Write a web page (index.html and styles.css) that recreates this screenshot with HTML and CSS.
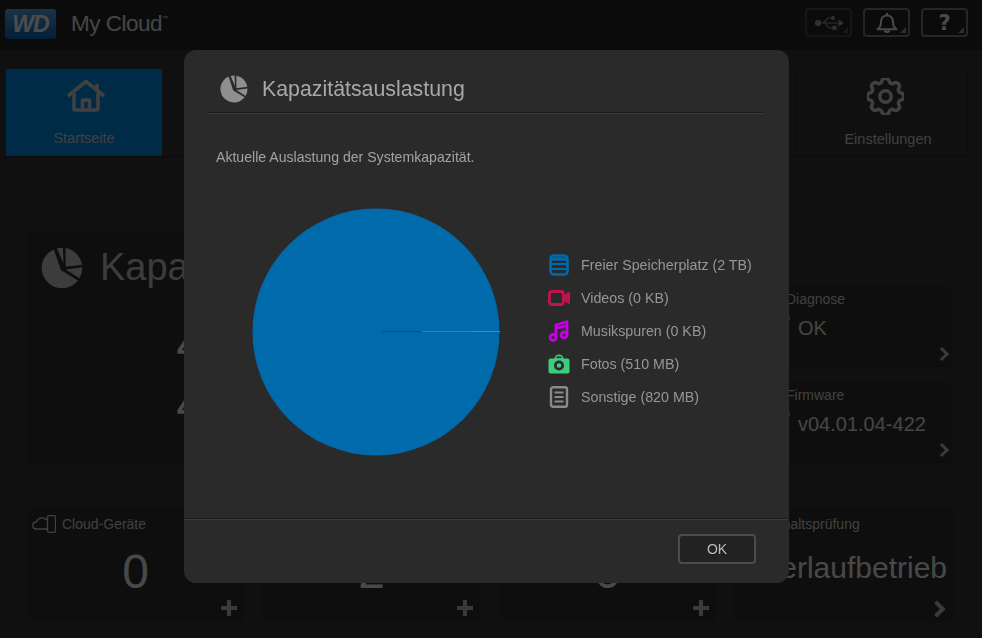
FILE: index.html
```html
<!DOCTYPE html>
<html lang="de">
<head>
  <meta charset="UTF-8">
  <title>My Cloud</title>
  <link rel="stylesheet" href="styles.css">
</head>
<body>

  <svg class="defs" width="0" height="0">
    <symbol id="pie" viewBox="0 0 28 28">
      <path d="M8.6 1.6 L13.2 15.4 L24.6 22.3 A13.5 13.5 0 1 1 8.6 1.6Z"/>
      <path d="M10.6 .9 A13.5 13.5 0 0 1 14.6 .5 L15 11Z"/>
      <path d="M16.4 .7 A13.5 13.5 0 0 1 27.3 11.8 L16.4 13.2Z"/>
      <path d="M16.5 15 L27.5 13.5 A13.5 13.5 0 0 1 25.6 20.9Z"/>
    </symbol>
  </svg>

  <!-- HEADER -->
  <header class="topbar">
    <div class="logo">WD</div>
    <div class="brand">My Cloud<sup>™</sup></div>
    <div class="top-buttons">
      <div class="top-btn dim">
        <svg width="28" height="14" viewBox="0 0 28 14" fill="none" stroke="currentColor" stroke-width="1.2">
          <circle cx="3" cy="7" r="2.6" fill="currentColor"/>
          <path d="M3 7H27M8 7L13 2H17M10 7L14 12H19"/>
          <path d="M24 4.5L28 7L24 9.5Z" fill="currentColor"/>
          <circle cx="18" cy="2" r="1.5" fill="currentColor"/>
          <rect x="18" y="10.4" width="3" height="3" fill="currentColor"/>
        </svg>
      </div>
      <div class="top-btn">
        <svg width="22" height="20" viewBox="0 0 22 20" fill="none" stroke="currentColor" stroke-width="2">
          <path d="M1.500 16.300C4.500 14.500 5 12 5 9C5 5 7.500 2.500 11 2.500S17 5 17 9C17 12 17.500 14.500 20.500 16.300Z" stroke-linejoin="round"/>
          <path d="M8.500 17.500Q11 20.500 13.500 17.500" stroke-width="2.200"/>
          <path d="M11 0V2.500"/>
        </svg>
      </div>
      <div class="top-btn help">?</div>
    </div>
  </header>

  <!-- NAV -->
  <nav class="nav">
    <div class="nav-tile home">
      <div class="nav-active">
        <svg class="home-icon" width="40" height="33" viewBox="0 0 40 33" fill="none" stroke="currentColor" stroke-width="3.600" stroke-linejoin="round">
          <path d="M2 17L20 2.500L38 17M31 5V11"/>
          <path d="M8 14V29.500Q8 31 9.500 31H30.500Q32 31 32 29.500V14"/>
          <path d="M16.500 31V21H23.500V31"/>
        </svg>
        <span>Startseite</span>
      </div>
    </div>
    <div class="nav-rest"></div>
    <div class="nav-tile settings">
      <svg width="37" height="37" viewBox="0 0 36 36" fill="none" stroke="currentColor" stroke-width="3.400">
        <path d="M14.500 2.900A3.600 3.600 0 0 1 21.500 2.900A3 3 0 0 0 26.200 4.900A3.600 3.600 0 0 1 31.100 9.800A3 3 0 0 0 33.100 14.500A3.600 3.600 0 0 1 33.100 21.500A3 3 0 0 0 31.100 26.200A3.600 3.600 0 0 1 26.200 31.100A3 3 0 0 0 21.500 33.100A3.600 3.600 0 0 1 14.500 33.100A3 3 0 0 0 9.800 31.100A3.600 3.600 0 0 1 4.900 26.200A3 3 0 0 0 2.900 21.500A3.600 3.600 0 0 1 2.900 14.500A3 3 0 0 0 4.900 9.800A3.600 3.600 0 0 1 9.800 4.900A3 3 0 0 0 14.500 2.900Z"/>
        <circle cx="18" cy="18" r="5.500"/>
      </svg>
      <span>Einstellungen</span>
    </div>
  </nav>

  <!-- DASHBOARD -->
  <main class="dash">
    <section class="panel panel-top">
      <div class="card capacity">
        <div class="capacity-head">
          <svg class="pie-big" width="42" height="42"><use href="#pie"/></svg>
          <span>Kapazität</span>
        </div>
        <div class="capacity-value first">4</div>
        <div class="capacity-value">4</div>
      </div>
      <div class="status-col">
        <div class="card status">
          <div class="status-label">Diagnose</div>
          <div class="status-value"><i class="dot"></i>OK</div>
          <span class="chev"></span>
        </div>
        <div class="card status">
          <div class="status-label">Firmware</div>
          <div class="status-value"><i class="dot"></i>v04.01.04-422</div>
          <span class="chev"></span>
        </div>
      </div>
    </section>

    <section class="panel panel-bottom">
      <div class="card small">
        <div class="small-label">
          <svg width="24" height="18" viewBox="0 0 24 18" fill="none" stroke="currentColor" stroke-width="1.300">
            <path d="M15 14H4.500C2 14 .7 12.500 .7 10.500S2 7 4.500 7C5.500 4 7.500 2.800 9.500 2.800S13.500 3.500 15 5"/>
            <rect x="15.500" y=".7" width="8" height="16.600" rx="1.500"/>
          </svg>
          Cloud-Geräte
        </div>
        <div class="small-value">0</div>
        <span class="plus"></span>
      </div>
      <div class="card small">
        <div class="small-label"></div>
        <div class="small-value">2</div>
        <span class="plus"></span>
      </div>
      <div class="card small">
        <div class="small-label"></div>
        <div class="small-value">0</div>
        <span class="plus"></span>
      </div>
      <div class="card small">
        <div class="small-label right-label">Inhaltsprüfung</div>
        <div class="small-value wide">Dauerlaufbetrieb</div>
        <span class="chev big"></span>
      </div>
    </section>
  </main>

  <div class="overlay"></div>

  <!-- DIALOG -->
  <div class="modal">
    <div class="modal-head">
      <svg class="pie-small" width="28" height="28"><use href="#pie"/></svg>
      <h1>Kapazitätsauslastung</h1>
    </div>
    <div class="modal-body">
      <p class="intro">Aktuelle Auslastung der Systemkapazität.</p>
      <div class="chart-row">
        <svg class="chart" width="248" height="248" viewBox="0 0 248 248">
          <circle cx="124" cy="124" r="123.500" fill="#006aab"/>
          <rect x="130" y="123" width="40" height="1" fill="#0f4d74"/>
          <rect x="170" y="123" width="50" height="1" fill="#4f7a78"/>
          <rect x="220" y="123" width="28" height="1" fill="#5f8d60"/>
        </svg>
        <ul class="legend">
          <li>
            <svg width="22" height="22" viewBox="0 0 22 22" fill="none" stroke="#0069aa" stroke-width="2.600">
              <rect x="2.500" y="1.500" width="17" height="19" rx="3.500"/>
              <path d="M2.500 5H19.500" stroke-width="3.500"/>
              <path d="M3 10H19M3 15H19" stroke-width="1.800"/>
            </svg>
            Freier Speicherplatz (2 TB)
          </li>
          <li>
            <svg width="22" height="16" viewBox="0 0 22 16" fill="none" stroke="#c2134f" stroke-width="2.800" stroke-linejoin="round">
              <rect x="1.400" y="1.500" width="14" height="13" rx="2.500"/>
              <path d="M16 7L20.600 3.500V12.500L16 9Z" fill="#c2134f"/>
            </svg>
            Videos (0 KB)
          </li>
          <li>
            <svg width="22" height="22" viewBox="0 0 22 22" fill="none" stroke="#c800e8" stroke-width="2.800">
              <circle cx="5" cy="17.500" r="3"/>
              <circle cx="16" cy="15" r="3"/>
              <path d="M8 17.500V5L19 1.800V15" stroke-linejoin="round"/>
              <path d="M8 8.500L19 5.500"/>
            </svg>
            Musikspuren (0 KB)
          </li>
          <li>
            <svg width="22" height="20" viewBox="0 0 22 20" fill="#3ecb80">
              <path d="M2.500 4.500H6.500C7 1.500 8.500 .5 11 .5S15 1.500 15.500 4.500H19.500Q21.500 4.500 21.500 6.500V17.500Q21.500 19.500 19.500 19.500H2.500Q.5 19.500 .5 17.500V6.500Q.5 4.500 2.500 4.500Z"/>
              <circle cx="11" cy="11.500" r="5" fill="#2a2a2a"/>
              <circle cx="11" cy="11.500" r="2.300"/>
              <rect x="8.500" y="2.500" width="5" height="1.600" fill="#2a2a2a"/>
            </svg>
            Fotos (510 MB)
          </li>
          <li>
            <svg width="22" height="22" viewBox="0 0 22 22" fill="none" stroke="#8a8a8a" stroke-width="2.400">
              <rect x="3" y="1.200" width="16" height="19.600" rx="2"/>
              <path d="M6.500 6.500H15.500M6.500 11H15.500M6.500 15.500H15.500" stroke-width="2"/>
            </svg>
            Sonstige (820 MB)
          </li>
        </ul>
      </div>
    </div>
    <div class="modal-foot">
      <button class="ok">OK</button>
    </div>
  </div>

</body>
</html>
```

FILE: styles.css
```css
:root {
  --bg-color: #363636;
  --top-color: #262626;
  --card-color: #303030;
  --line-color: #3e3e3e;
  --accent-color: #008fed;
  --text-color: #f0f0f0;
  --modal-color: #2a2a2a;
  --modal-text: #a3a3a3;
}
html, body {
  height: 638px;
  overflow: hidden;
}
body {
  font-family: "Liberation Sans", Arial, sans-serif;
  margin: 0;
  background: var(--bg-color);
  color: var(--text-color);
}
.defs {
  display: block;
  height: 0;
}

/* header */
.topbar {
  height: 50px;
  box-sizing: border-box;
  padding: 9px 14px 0 5px;
  display: flex;
  align-items: flex-start;
  background: var(--top-color);
}
.logo {
  width: 51px;
  height: 30px;
  border-radius: 3px;
  background: linear-gradient(#5aa8f0, #0a66c0);
  color: #fff;
  font-size: 23px;
  line-height: 30px;
  font-weight: bold;
  font-style: italic;
  text-align: center;
  letter-spacing: -1px;
}
.brand {
  margin-left: 15px;
  font-size: 22.5px;
  line-height: 30px;
  letter-spacing: -.5px;
  color: #e8e8e8;
}
.brand sup {
  font-size: 6px;
  vertical-align: 11px;
  line-height: 0;
}
.top-buttons {
  margin-left: auto;
  display: flex;
  gap: 11px;
  margin-top: -1px;
}
.top-btn {
  position: relative;
  width: 47px;
  height: 29px;
  box-sizing: border-box;
  border: 2px solid #808080;
  border-radius: 4px;
  display: flex;
  align-items: center;
  justify-content: center;
  color: #f4f4f4;
}
.top-btn::after {
  content: "";
  position: absolute;
  right: 2px;
  bottom: 2px;
  border-style: solid;
  border-width: 0 0 6px 6px;
  border-color: transparent transparent #9a9a9a transparent;
}
.top-btn.dim {
  border-color: #4a4a4a;
  color: #a0a0a0;
}
.top-btn.dim::after {
  border-bottom-color: #555;
}
.help {
  font-size: 21px;
  font-weight: bold;
  font-family: "DejaVu Sans", sans-serif;
}

/* nav */
.nav {
  margin: 19px 14px 0 6px;
  height: 87px;
  display: flex;
  border-bottom: 1px solid #262626;
}
.nav-tile {
  display: flex;
  flex-direction: column;
  align-items: center;
  font-size: 14.5px;
  color: #d8d8d8;
  box-sizing: border-box;
}
.home {
  width: 173px;
  align-items: flex-start;
  border-right: 1px solid var(--line-color);
}
.nav-active {
  width: 156px;
  height: 100%;
  background: var(--accent-color);
  display: flex;
  flex-direction: column;
  align-items: center;
  padding-top: 10px;
  box-sizing: border-box;
}
.home-icon {
  margin-left: 4px;
}
.nav-active span {
  margin-top: 18px;
}
.nav-rest {
  flex: 1;
}
.settings {
  width: 172px;
  padding: 8px 0 0 6px;
  border: 1px solid #2a2a2a;
  border-bottom: 0;
}
.settings span {
  margin: 16px 0 0 6px;
}

/* dashboard */
.panel {
  margin: 0 14px 0 6px;
  box-sizing: border-box;
  border-radius: 8px;
  border: 1px solid #3a3a3a;
  border-top-color: transparent;
}
.panel-top {
  margin-top: 18px;
  height: 312px;
  padding: 55px 14px 0 18px;
  display: flex;
  justify-content: space-between;
  align-items: flex-start;
}
.panel-bottom {
  height: 160px;
  border-top-color: #3a3a3a;
  padding: 17px 12px 0 18px;
  display: grid;
  grid-template-columns: 221px 221px 221px 222px;
  column-gap: 15px;
  align-items: start;
}
.card {
  position: relative;
  background: var(--card-color);
  border-radius: 8px;
  border: 1px solid #383838;
  box-sizing: border-box;
}
.capacity {
  width: 456px;
  height: 235px;
  padding: 14px 0 0 15px;
}
.capacity-head {
  display: flex;
  align-items: center;
  font-size: 38px;
  color: #c8c8c8;
  gap: 17px;
}
.pie-big, .pie-small {
  fill: currentColor;
}
.capacity-value {
  font-size: 53px;
  line-height: 60px;
  text-align: center;
  width: 300px;
  color: #f0f0f0;
}
.capacity-value.first {
  margin-top: 25px;
}
.status-col {
  display: flex;
  flex-direction: column;
  gap: 13px;
  margin-top: 54px;
}
.status {
  width: 220px;
  height: 83px;
  padding: 4px 0 0 52px;
}
.status-label {
  font-size: 14px;
  line-height: 18px;
  color: #d8d8d8;
}
.status-value {
  margin-top: 7px;
  padding-left: 12px;
  font-size: 20px;
  line-height: 26px;
  position: relative;
  color: #e8e8e8;
}
.dot {
  position: absolute;
  left: -4px;
  top: -1px;
  width: 8px;
  height: 8px;
  border-radius: 50%;
  background: #3fcf60;
}
.chev {
  position: absolute;
  right: 5px;
  bottom: 8px;
  width: 10px;
  height: 10px;
  box-sizing: border-box;
  border-top: 3px solid #c4c4c4;
  border-right: 3px solid #c4c4c4;
  transform: rotate(45deg);
}
.chev.big {
  right: 11px;
  bottom: 7px;
  width: 12px;
  height: 12px;
  border-width: 4px;
}
.small {
  height: 118px;
  padding: 9px 0 0 6px;
}
.small-label {
  display: flex;
  align-items: center;
  gap: 6px;
  font-size: 14px;
  color: #d8d8d8;
  height: 18px;
}
.right-label {
  padding-left: 31px;
}
.small-value {
  font-size: 48px;
  line-height: 56px;
  color: #f0f0f0;
  text-align: center;
  margin: 11px 0 0 -6px;
}
.small-value.wide {
  font-size: 30px;
  text-align: right;
  white-space: nowrap;
  padding-right: 7px;
  margin: 7px 0 0 -30px;
}
.plus {
  position: absolute;
  right: 8px;
  bottom: 6px;
  width: 16px;
  height: 16px;
  background:
    linear-gradient(#c4c4c4, #c4c4c4) center / 16px 4px no-repeat,
    linear-gradient(#c4c4c4, #c4c4c4) center / 4px 16px no-repeat;
}

/* dialog */
.overlay {
  position: fixed;
  inset: 0;
  background: rgba(0, 0, 0, .7);
}
.modal {
  position: absolute;
  left: 184px;
  top: 50px;
  width: 605px;
  height: 533px;
  display: flex;
  flex-direction: column;
  background: var(--modal-color);
  border-radius: 12px;
  color: var(--modal-text);
}
.modal-head {
  height: 63px;
  margin: 0 24px 0 23px;
  box-sizing: border-box;
  padding: 25px 0 0 13px;
  display: flex;
  align-items: flex-start;
  gap: 14px;
  border-bottom: 1px solid #1d1d1d;
  box-shadow: 0 1px 0 #3a3a3a;
}
.pie-small {
  color: #8f8f8f;
}
.modal-head h1 {
  margin: 0;
  font-size: 21.33px;
  line-height: 28px;
  font-weight: normal;
  color: #a8a8a8;
}
.modal-body {
  flex: 1;
  padding: 0 0 0 32px;
}
.intro {
  margin: 36px 0 0;
  font-size: 14.1px;
  line-height: 16px;
}
.chart-row {
  display: flex;
  align-items: center;
  margin: 43px 0 0 36px;
}
.legend {
  list-style: none;
  margin: -2px 0 0 48px;
  padding: 0;
  font-size: 14.25px;
}
.legend li {
  height: 33px;
  display: flex;
  align-items: center;
  gap: 11px;
  color: #969696;
}
.legend svg {
  flex: none;
}
.modal-foot {
  height: 65px;
  box-sizing: border-box;
  border-top: 1px solid #1d1d1d;
  box-shadow: inset 0 1px 0 #3a3a3a;
  padding: 15px 33px 0 0;
  display: flex;
  justify-content: flex-end;
  align-items: flex-start;
}
.ok {
  width: 78px;
  height: 30px;
  background: #222;
  border: 2px solid #4c4c4c;
  border-radius: 4px;
  color: #bbb;
  font-family: inherit;
  font-size: 14px;
  cursor: pointer;
}
```
